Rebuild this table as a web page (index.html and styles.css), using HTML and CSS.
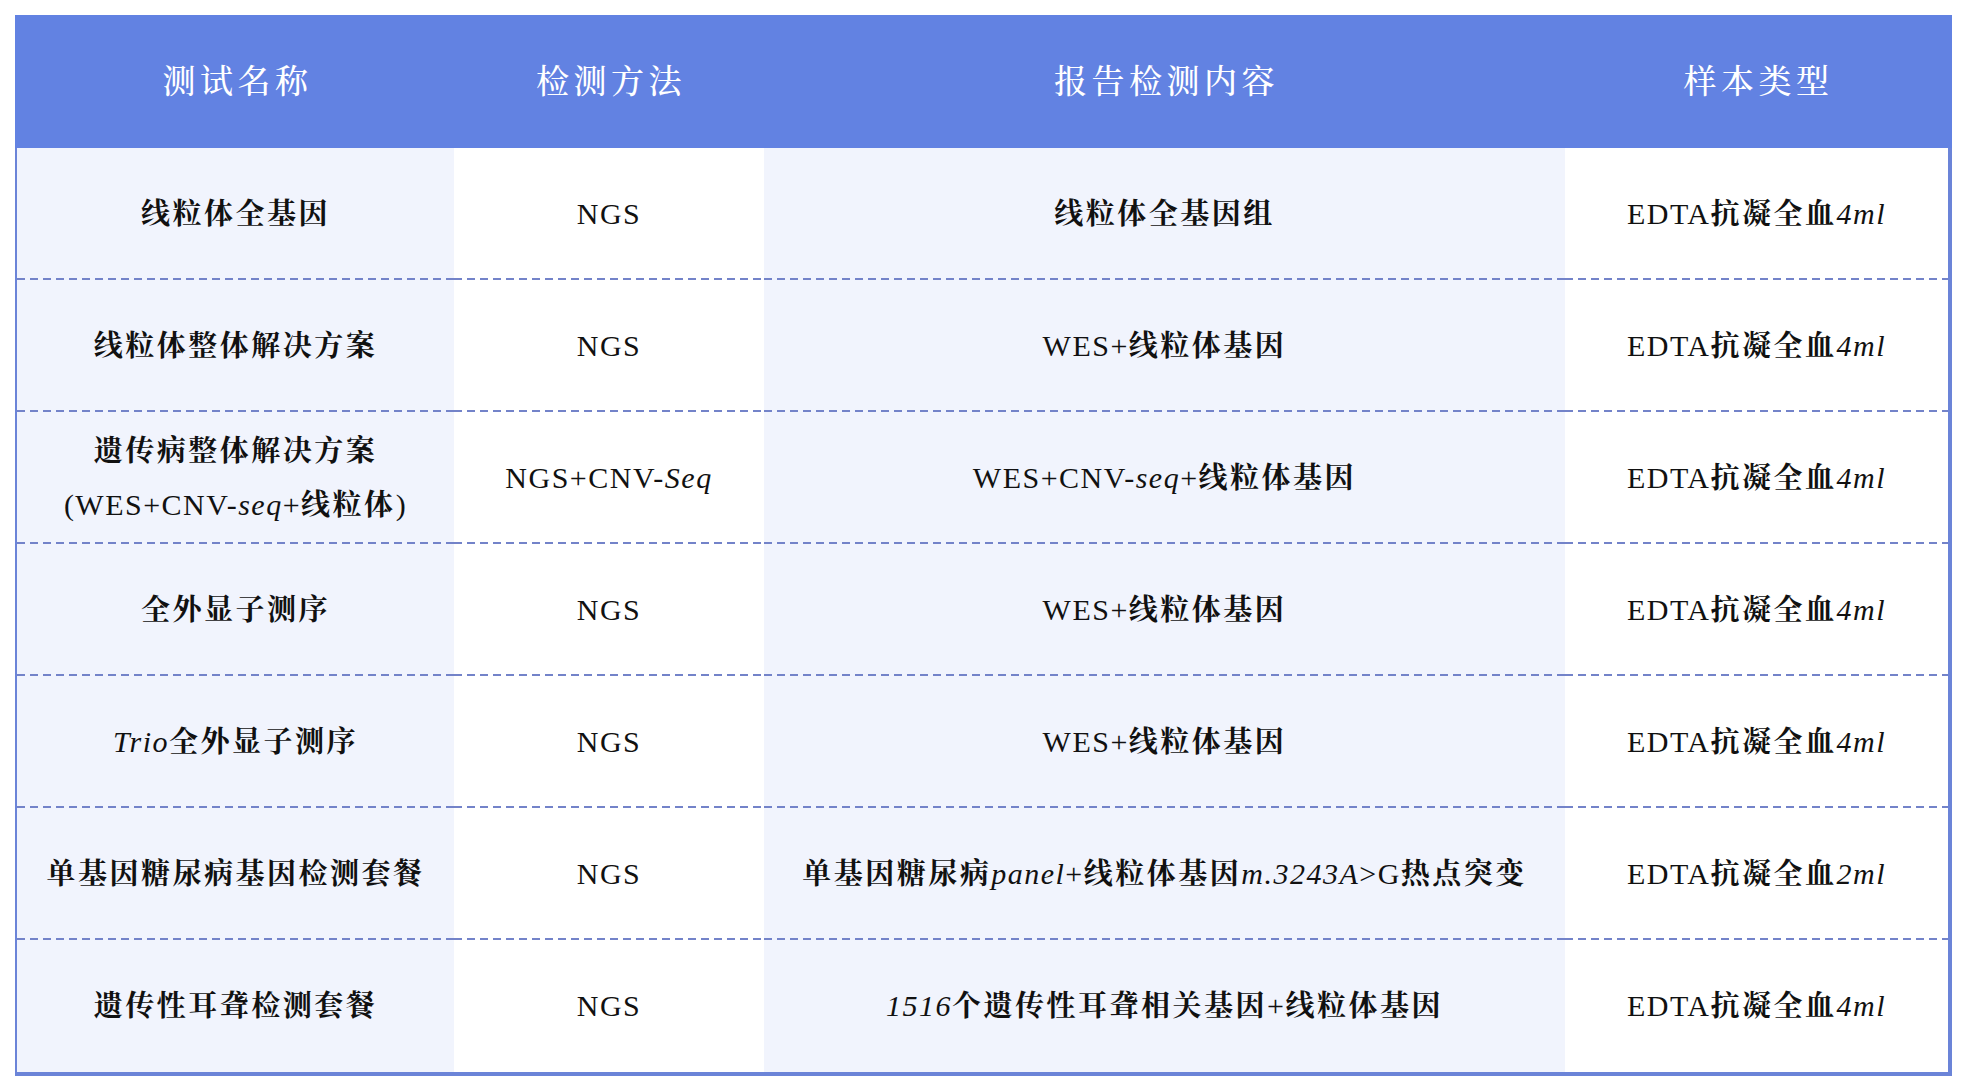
FILE: index.html
```html
<!DOCTYPE html>
<html lang="zh-CN">
<head>
<meta charset="utf-8">
<title>检测项目</title>
<link rel="stylesheet" href="styles.css">
</head>
<body>
<div class="table">
  <div class="head">
    <div class="hcell">测试名称</div>
    <div class="hcell">检测方法</div>
    <div class="hcell">报告检测内容</div>
    <div class="hcell">样本类型</div>
  </div>
  <div class="row">
    <div class="cell alt"><span>线粒体全基因</span></div>
    <div class="cell"><span class="en">NGS</span></div>
    <div class="cell alt"><span>线粒体全基因组</span></div>
    <div class="cell"><span><span class="en">EDTA</span>抗凝全血<i class="en">4ml</i></span></div>
  </div>
  <div class="row">
    <div class="cell alt"><span>线粒体整体解决方案</span></div>
    <div class="cell"><span class="en">NGS</span></div>
    <div class="cell alt"><span><span class="en">WES+</span>线粒体基因</span></div>
    <div class="cell"><span><span class="en">EDTA</span>抗凝全血<i class="en">4ml</i></span></div>
  </div>
  <div class="row">
    <div class="cell alt"><span>遗传病整体解决方案<br><span class="en">(WES+CNV-<i>seq</i>+</span>线粒体<span class="en">)</span></span></div>
    <div class="cell"><span class="en">NGS+CNV-<i>Seq</i></span></div>
    <div class="cell alt"><span><span class="en">WES+CNV-<i>seq</i>+</span>线粒体基因</span></div>
    <div class="cell"><span><span class="en">EDTA</span>抗凝全血<i class="en">4ml</i></span></div>
  </div>
  <div class="row">
    <div class="cell alt"><span>全外显子测序</span></div>
    <div class="cell"><span class="en">NGS</span></div>
    <div class="cell alt"><span><span class="en">WES+</span>线粒体基因</span></div>
    <div class="cell"><span><span class="en">EDTA</span>抗凝全血<i class="en">4ml</i></span></div>
  </div>
  <div class="row">
    <div class="cell alt"><span><i class="en">Trio</i>全外显子测序</span></div>
    <div class="cell"><span class="en">NGS</span></div>
    <div class="cell alt"><span><span class="en">WES+</span>线粒体基因</span></div>
    <div class="cell"><span><span class="en">EDTA</span>抗凝全血<i class="en">4ml</i></span></div>
  </div>
  <div class="row">
    <div class="cell alt"><span>单基因糖尿病基因检测套餐</span></div>
    <div class="cell"><span class="en">NGS</span></div>
    <div class="cell alt"><span>单基因糖尿病<i class="en">panel</i><span class="en">+</span>线粒体基因<i class="en">m.3243A</i><span class="en">&gt;G</span>热点突变</span></div>
    <div class="cell"><span><span class="en">EDTA</span>抗凝全血<i class="en">2ml</i></span></div>
  </div>
  <div class="row last">
    <div class="cell alt"><span>遗传性耳聋检测套餐</span></div>
    <div class="cell"><span class="en">NGS</span></div>
    <div class="cell alt"><span><i class="en">1516</i>个遗传性耳聋相关基因<span class="en">+</span>线粒体基因</span></div>
    <div class="cell"><span><span class="en">EDTA</span>抗凝全血<i class="en">4ml</i></span></div>
  </div>
</div>
</body>
</html>
```

FILE: styles.css
```css
html, body {
  margin: 0;
  padding: 0;
  background: #ffffff;
}

body {
  padding: 15px 14px 0 15px;
  font-family: "Liberation Serif", "Noto Serif CJK SC", "Noto Sans CJK SC", serif;
  color: #111111;
}

.table {
  width: 1937px;
  box-sizing: border-box;
  border-left: 2px solid #6b84d8;
  border-right: 4px solid #6b84d8;
  border-bottom: 4px solid #6b84d8;
  display: flex;
  flex-direction: column;
}

.head {
  display: grid;
  grid-template-columns: 437px 310px 801px 383px;
  height: 133px;
  background: #6282e2;
  margin: 0 -4px 0 -2px;
  padding: 0 4px 0 2px;
}

.hcell {
  display: flex;
  align-items: center;
  justify-content: center;
  color: #ffffff;
  font-size: 33px;
  font-weight: 500;
  letter-spacing: 4.5px;
  padding: 0 0 6px 4px;
}

.row {
  display: grid;
  grid-template-columns: 437px 310px 801px 383px;
  height: 132px;
}

.cell {
  display: flex;
  align-items: center;
  justify-content: center;
  text-align: center;
  font-size: 29px;
  font-weight: 700;
  letter-spacing: 2.5px;
  line-height: 54px;
  background:
    linear-gradient(90deg, #7383c9 0 8px, transparent 8px 13px) 0 100% / 13px 2px repeat-x,
    #ffffff;
}

.cell.alt {
  background:
    linear-gradient(90deg, #7383c9 0 8px, transparent 8px 13px) 0 100% / 13px 2px repeat-x,
    #f1f4fd;
}

.row.last .cell {
  background: #ffffff;
}

.row.last .cell.alt {
  background: #f1f4fd;
}

.cell .en {
  font-size: 30px;
  font-weight: 400;
  letter-spacing: 1.5px;
}

.cell .en .en,
.cell .en i {
  font-size: inherit;
}

.cell i {
  font-style: italic;
}
```
